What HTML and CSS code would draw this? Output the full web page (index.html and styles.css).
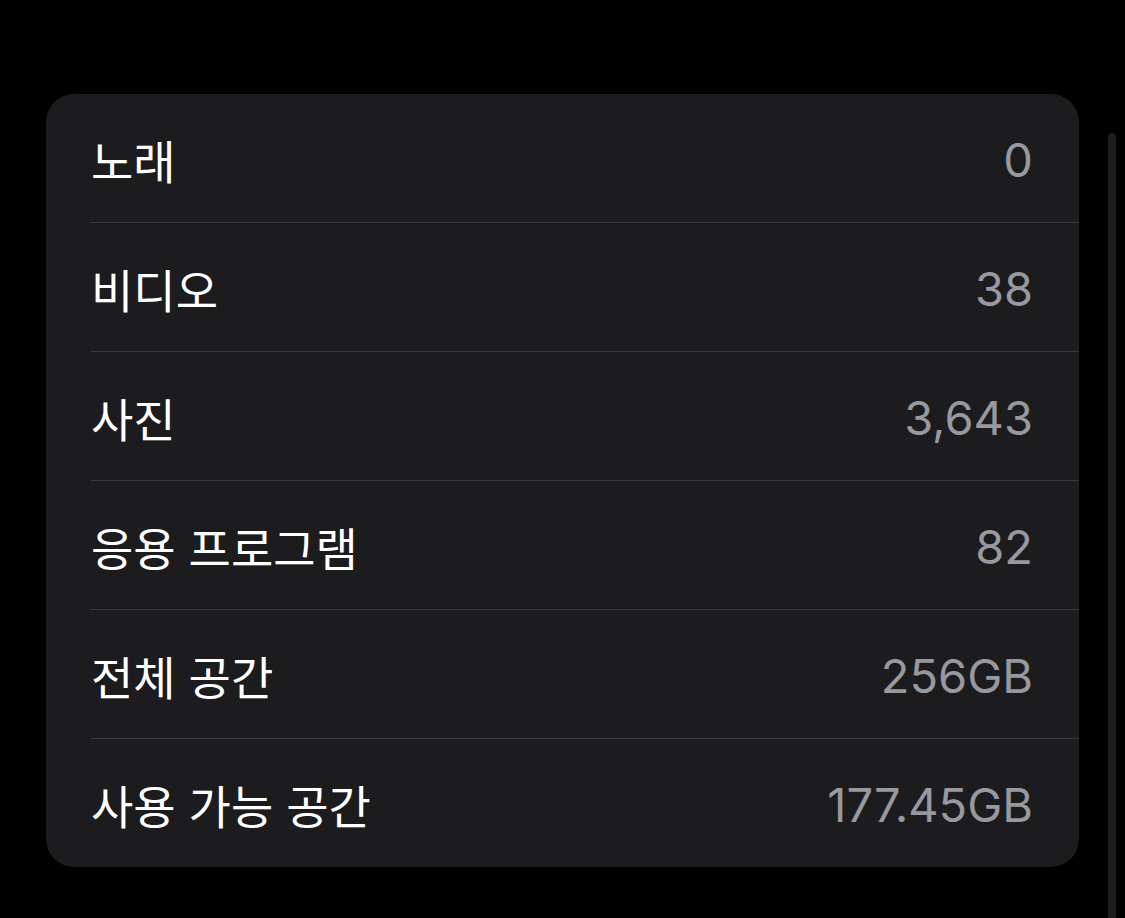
FILE: index.html
```html
<!DOCTYPE html>
<html lang="ko">
<head>
<meta charset="utf-8">
<link rel="stylesheet" href="styles.css">
</head>
<body>
<div class="page">
  <div class="card">
    <div class="row"><span class="label">노래</span><span class="value">0</span></div>
    <div class="row"><span class="label">비디오</span><span class="value">38</span></div>
    <div class="row"><span class="label">사진</span><span class="value">3,643</span></div>
    <div class="row"><span class="label">응용 프로그램</span><span class="value">82</span></div>
    <div class="row"><span class="label">전체 공간</span><span class="value">256GB</span></div>
    <div class="row"><span class="label">사용 가능 공간</span><span class="value">177.45GB</span></div>
  </div>
  <div class="scrollbar"></div>
</div>
</body>
</html>
```
FILE: styles.css
```css
html, body {
  margin: 0;
  padding: 0;
  background: #000;
}
.page {
  position: relative;
  width: 1125px;
  height: 918px;
  overflow: hidden;
  padding-top: 94px;
  box-sizing: border-box;
}
.card {
  margin-left: 46px;
  width: 1033px;
  background: #1c1c1e;
  border-radius: 28px;
  padding-left: 45px;
  box-sizing: border-box;
  font-family: Inter, "Noto Sans CJK KR", sans-serif;
}
.row {
  height: 128px;
  display: flex;
  align-items: center;
  justify-content: space-between;
  padding-right: 46px;
  border-bottom: 1px solid #38383a;
}
.row:last-child {
  border-bottom: none;
}
.label {
  color: #ffffff;
  font-size: 46px;
  margin-top: 2px;
}
.value {
  color: #98989f;
  font-size: 47px;
  margin-top: 3px;
}
.scrollbar {
  position: absolute;
  left: 1108px;
  top: 133px;
  width: 8px;
  height: 800px;
  background: #1c1c1d;
  border-radius: 4px;
}
```
